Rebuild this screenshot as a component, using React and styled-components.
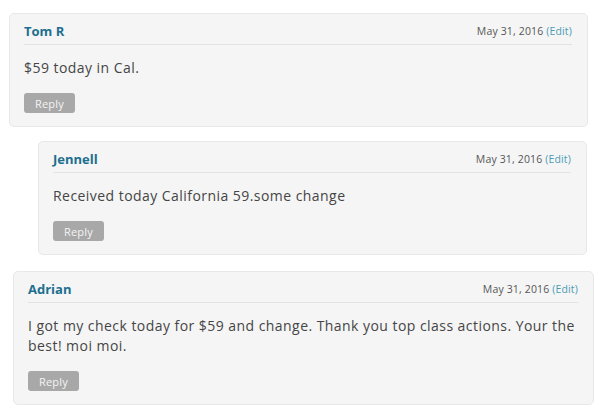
import styled, { createGlobalStyle } from "styled-components";

const comments = [
  {
    id: 1,
    author: "Tom R",
    date: "May 31, 2016",
    text: "$59 today in Cal.",
    offset: 9,
    width: 579,
    top: 13,
  },
  {
    id: 2,
    author: "Jennell",
    date: "May 31, 2016",
    text: "Received today California 59.some change",
    offset: 38,
    width: 549,
    top: 14,
  },
  {
    id: 3,
    author: "Adrian",
    date: "May 31, 2016",
    text: "I got my check today for $59 and change. Thank you top class actions. Your the best! moi moi.",
    offset: 13,
    width: 581,
    top: 16,
  },
];

export default function App() {
  return (
    <>
      <GlobalStyle />
      <CommentList>
        {comments.map((c) => (
          <Card key={c.id} $offset={c.offset} $width={c.width} $top={c.top}>
            <Header>
              <Author>{c.author}</Author>
              <Meta>
                {c.date} <EditLink>(Edit)</EditLink>
              </Meta>
            </Header>
            <Body>{c.text}</Body>
            <ReplyButton>Reply</ReplyButton>
          </Card>
        ))}
      </CommentList>
    </>
  );
}

const GlobalStyle = createGlobalStyle`
  body {
    margin: 0;
    background: #fff;
    font-family: "Open Sans", "Liberation Sans", sans-serif;
  }
`;

const CommentList = styled.div`
  display: flex;
  flex-direction: column;
  width: 606px;
`;

const Card = styled.div`
  box-sizing: border-box;
  margin-left: ${({ $offset }) => $offset}px;
  margin-top: ${({ $top }) => $top}px;
  width: ${({ $width }) => $width}px;
  padding: 0 15px 13px 14px;
  background: #f5f5f5;
  border: 1px solid #e8e8e8;
  border-radius: 5px;
`;

const Header = styled.div`
  display: flex;
  justify-content: space-between;
  align-items: center;
  padding: 7px 0 3px;
  line-height: 20px;
  border-bottom: 1px solid #e3e3e3;
`;

const Author = styled.span`
  font-size: 13px;
  font-weight: 700;
  color: #1d6f8f;
`;

const Meta = styled.span`
  font-size: 10.5px;
  letter-spacing: 0.15px;
  color: #555;
`;

const EditLink = styled.span`
  color: #4b9bb3;
`;

const Body = styled.p`
  margin: 13px 0 0;
  font-size: 14px;
  letter-spacing: 0.45px;
  line-height: 20px;
  color: #454545;
`;

const ReplyButton = styled.button`
  display: block;
  margin-top: 15px;
  width: 51px;
  height: 20px;
  padding: 0;
  border: none;
  border-radius: 3px;
  background: #a8a8a8;
  color: #f4f4f4;
  font-family: inherit;
  font-size: 11px;
  letter-spacing: 0.2px;
`;
